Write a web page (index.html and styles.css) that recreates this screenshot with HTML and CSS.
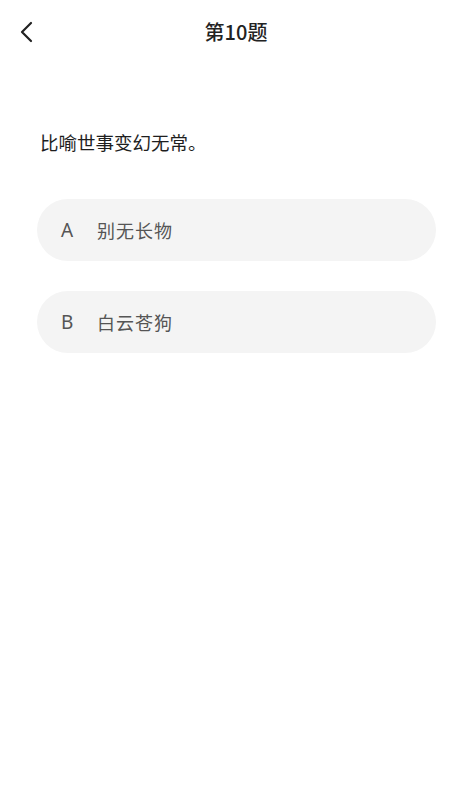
FILE: index.html
```html
<!DOCTYPE html>
<html lang="zh">
<head>
<meta charset="utf-8">
<link rel="stylesheet" href="styles.css">
</head>
<body>
<div class="page">
  <header class="nav">
    <span class="back">
      <svg width="16" height="22" viewBox="0 0 16 22"><path d="M12 2 L3 11 L12 20" fill="none" stroke="#222" stroke-width="2.2" stroke-linecap="round" stroke-linejoin="round"/></svg>
    </span>
    <h1 class="title">第10题</h1>
  </header>
  <p class="question">比喻世事变幻无常。</p>
  <div class="options">
    <div class="option"><span class="letter">A</span><span class="text">别无长物</span></div>
    <div class="option"><span class="letter">B</span><span class="text">白云苍狗</span></div>
  </div>
</div>
</body>
</html>
```
FILE: styles.css
```css
html, body {
  margin: 0;
  padding: 0;
  background: #fff;
}
body {
  font-family: "Noto Sans CJK SC", "Noto Sans", sans-serif;
  color: #222;
}
.page {
  width: 472px;
  height: 792px;
}
.nav {
  position: relative;
  height: 64px;
  display: flex;
  align-items: center;
  justify-content: center;
}
.back {
  position: absolute;
  left: 19px;
  top: 21px;
  display: flex;
}
.title {
  margin: 0;
  font-size: 20px;
  font-weight: 500;
  color: #222;
  line-height: 1;
}
.question {
  margin: 66px 0 0 40px;
  font-size: 18.5px;
  font-weight: 400;
  color: #1e1e1e;
  line-height: 24px;
}
.options {
  margin: 45px 36px 0 37px;
  display: flex;
  flex-direction: column;
  gap: 30px;
}
.option {
  height: 62px;
  border-radius: 31px;
  background: #f4f4f4;
  display: flex;
  align-items: center;
  padding-left: 24px;
  color: #555;
  font-size: 18px;
}
.letter {
  width: 36px;
  font-family: "Noto Sans", sans-serif;
  font-size: 19px;
}
.text {
  letter-spacing: 1px;
}
```
